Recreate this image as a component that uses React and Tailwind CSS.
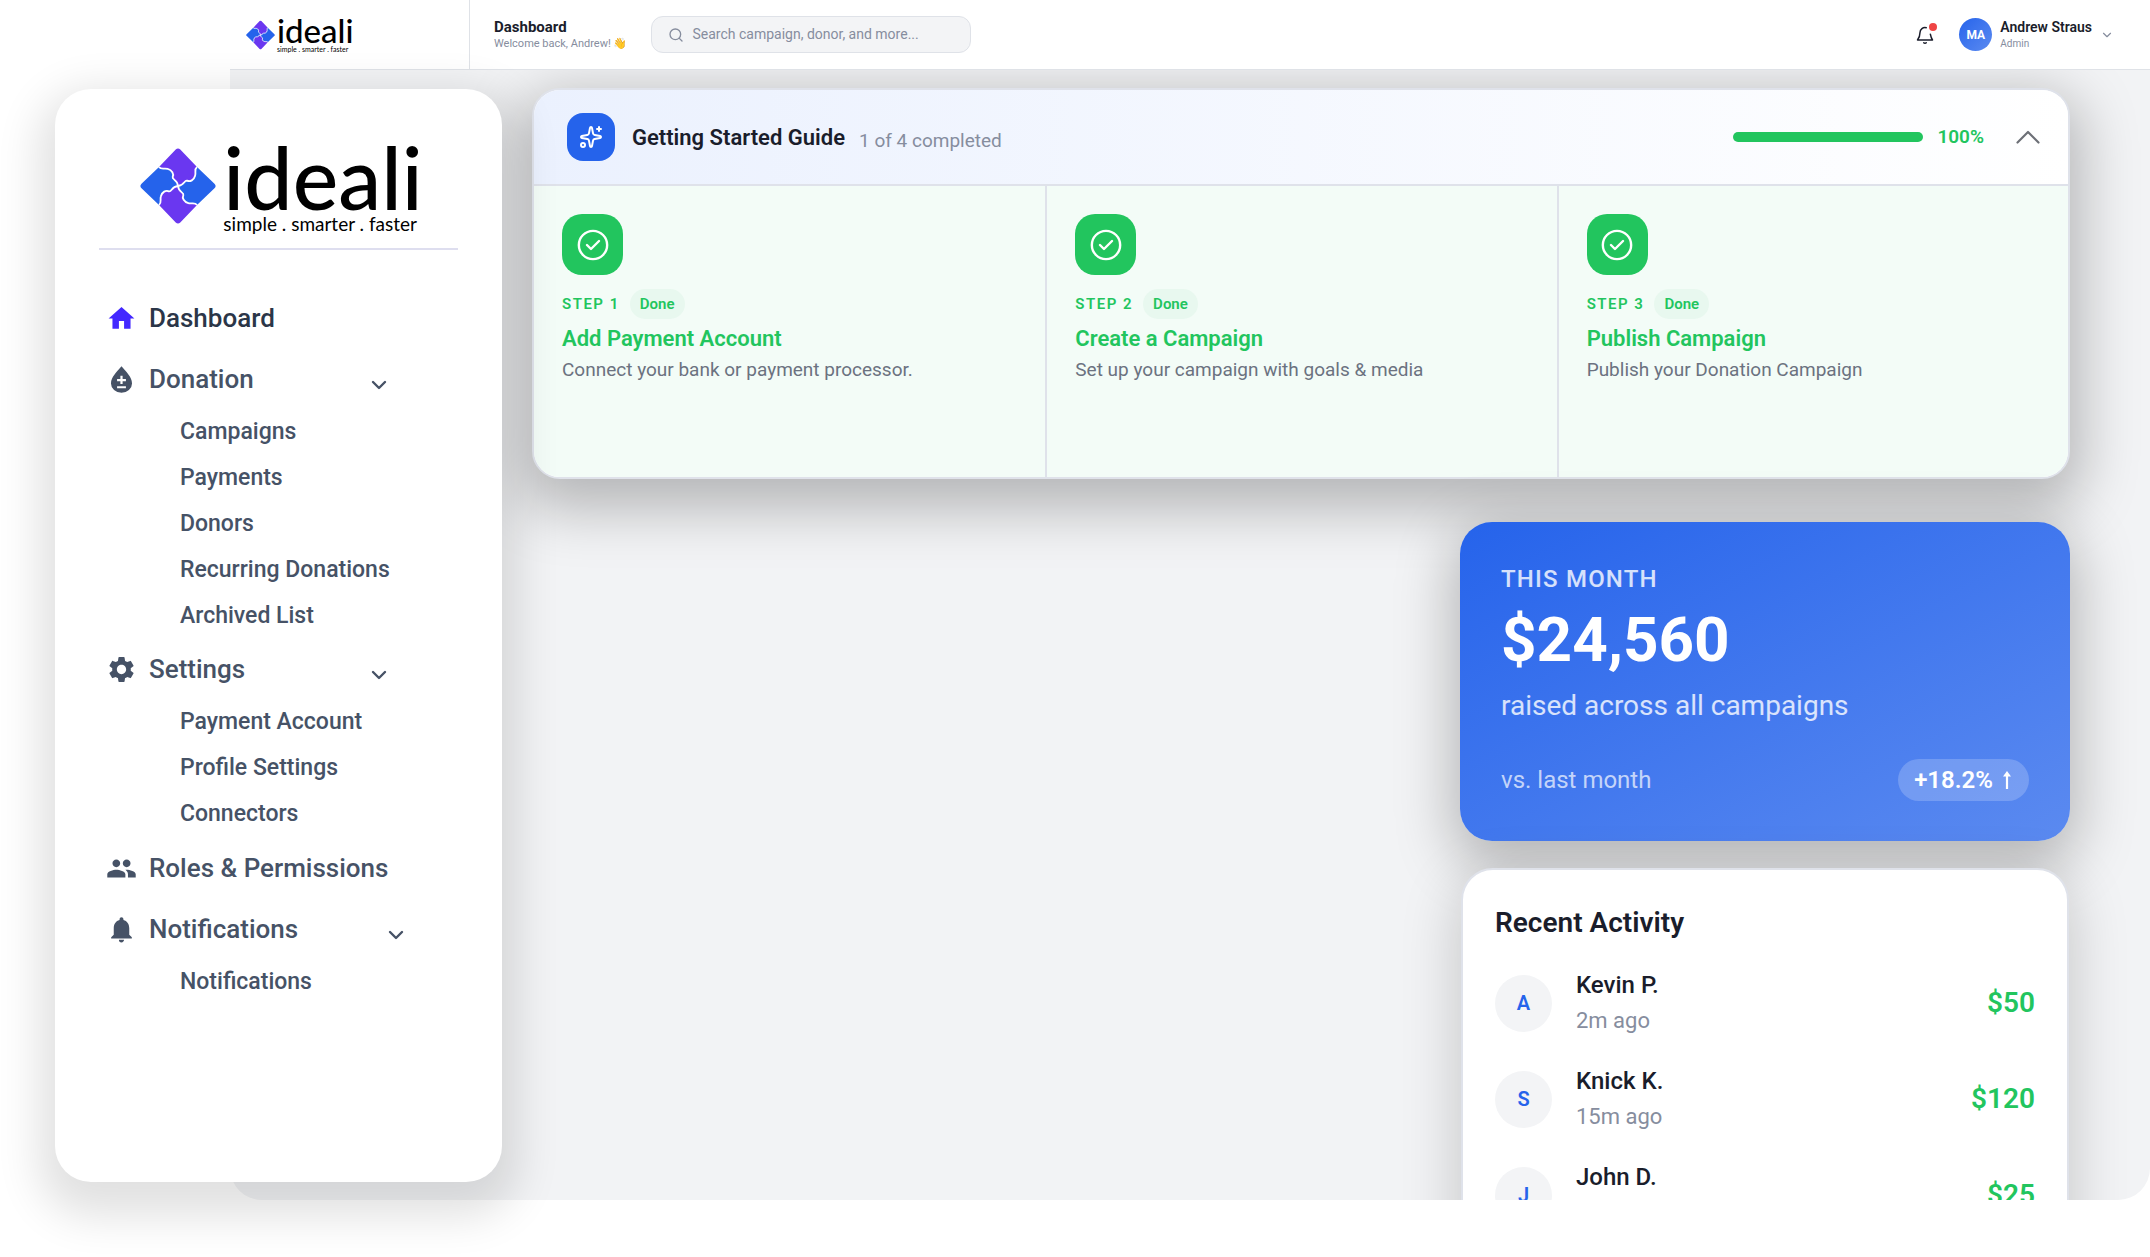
import { ChevronDown, Search, Sparkles } from "lucide-react";
import { MdHome, MdSettings, MdPeople, MdNotifications } from "react-icons/md";

const PIECE = "M-25-25C-22-21-18-24-13.5-22.5C-8-21-5-16-7-12C-8-8-1-9 0 0C9-1 8-8 12-7C16-5 21-8 22.5-13.5C24-18 21-22 25-25L3-48Q0-51-3-48Z";
const SEAM = "M-25-25C-22-21-18-24-13.5-22.5C-8-21-5-16-7-12C-8-8-1-9 0 0";

function LogoMark({ className }) {
  return (
    <svg viewBox="-50 -51 100 102" className={className} aria-hidden="true">
      <path d={PIECE} fill="#6a37f0" />
      <path d={PIECE} fill="#2563eb" transform="rotate(90)" />
      <path d={PIECE} fill="#6a37f0" transform="rotate(180)" />
      <path d={PIECE} fill="#2563eb" transform="rotate(270)" />
      {[0, 90, 180, 270].map((angle) => (
        <path key={angle} d={SEAM} fill="none" stroke="#fff" strokeWidth="2.400" transform={`rotate(${angle})`} />
      ))}
    </svg>
  );
}

function Logo({ large }) {
  return (
    <div className={large ? "flex items-center gap-[7px]" : "flex items-center gap-[2px]"}>
      <LogoMark className={large ? "h-[78px] w-[76px]" : "h-[30px] w-[29px]"} />
      <div className="font-[Lato] text-black">
        <div className={large ? "text-[86px] leading-[76px] font-medium" : "text-[33px] leading-[29px] font-medium"}>ideali</div>
        <div className={large ? "text-[19px] leading-[18px] whitespace-nowrap" : "text-[7px] leading-[8px] whitespace-nowrap"}>
          simple . smarter . faster
        </div>
      </div>
    </div>
  );
}

function DropIcon({ className }) {
  return (
    <svg viewBox="0 0 28 28" className={className} fill="currentColor" aria-hidden="true">
      <path
        fillRule="evenodd"
        d="M14 2C10 7 4.500 11.500 4.500 17.500a9.500 8.500 0 0 0 19 0C23.500 11.500 18 7 14 2zM13 10.500h2v3h3v2h-3v2.500h-2v-2.500h-3v-2h3zM10 20h8v2h-8z"
      />
    </svg>
  );
}

function TickCircle({ className }) {
  return (
    <svg viewBox="0 0 24 24" className={className} fill="none" stroke="currentColor" strokeWidth="1.700" strokeLinecap="round" strokeLinejoin="round" aria-hidden="true">
      <circle cx="12" cy="12" r="10" />
      <path d="m7.750 12 2.830 2.830 5.670-5.660" />
    </svg>
  );
}

const NAV = [
  { label: "Dashboard", icon: MdHome, active: true },
  {
    label: "Donation",
    icon: DropIcon,
    items: ["Campaigns", "Payments", "Donors", "Recurring Donations", "Archived List"],
  },
  { label: "Settings", icon: MdSettings, items: ["Payment Account", "Profile Settings", "Connectors"] },
  { label: "Roles & Permissions", icon: MdPeople },
  { label: "Notifications", icon: MdNotifications, wide: true, items: ["Notifications"] },
];

function NavGroup({ group }) {
  const Icon = group.icon;
  const content = (
    <>
      <span className="flex w-8 justify-center">
        <Icon className={group.active ? "size-[31px] text-[#4328ff]" : "size-[31px]"} />
      </span>
      <span className="flex-1 text-left">{group.label}</span>
    </>
  );
  return (
    <li>
      {group.items ? (
        <button
          type="button"
          aria-expanded="true"
          className={
            group.wide
              ? "flex h-[60px] w-[303px] items-center gap-3 text-[26px] font-medium"
              : "flex h-[60px] w-[286px] items-center gap-3 text-[26px] font-medium"
          }
        >
          {content}
          <ChevronDown className="mt-3 size-6" strokeWidth={2.4} />
        </button>
      ) : (
        <a
          href="#"
          className={
            group.active
              ? "flex h-[62px] items-center gap-3 text-[26px] font-medium text-[#2b3648]"
              : "flex h-[62px] items-center gap-3 text-[26px] font-medium"
          }
        >
          {content}
        </a>
      )}
      {group.items && (
        <ul>
          {group.items.map((item) => (
            <li key={item}>
              <a href="#" className="flex h-[46px] items-center pl-[75px] text-[23px] font-medium">
                {item}
              </a>
            </li>
          ))}
        </ul>
      )}
    </li>
  );
}

function Sidebar() {
  return (
    <aside className="z-20 col-start-1 row-start-1 mt-[89px] mb-[18px] ml-[55px] w-[447px] rounded-[36px] bg-white px-11 pt-[50px] shadow-[0_18px_44px_16px_rgba(0,0,0,0.12)]">
      <div className="flex justify-center border-b-2 border-[#dedeef] pb-[15px] pl-[6px]">
        <Logo large />
      </div>
      <nav className="mt-[37px] pl-[6px] text-[#465266]">
        <ul>
          {NAV.map((group) => (
            <NavGroup key={group.label} group={group} />
          ))}
        </ul>
      </nav>
    </aside>
  );
}

function NotificationBell() {
  return (
    <button type="button" aria-label="Alerts" className="relative flex size-6 items-center justify-center text-[#1a1d2b]">
      <svg viewBox="0 0 24 24" className="size-5" fill="none" stroke="currentColor" strokeWidth="1.800" strokeLinecap="round" strokeLinejoin="round" aria-hidden="true">
        <path d="M13.500 3.200A6 6 0 0 0 6 9c0 4-1.500 7-3 9h18c-1-1.500-2-4-2.600-7" />
        <path d="M10.500 21.300c.8.900 2.200.900 3 0" />
      </svg>
      <span className="absolute top-0 right-0 size-2 rounded-full bg-[#ef4444]" />
    </button>
  );
}

function Header() {
  return (
    <header className="relative z-10 flex h-[70px] shrink-0 items-center border-b border-[#dfe2e7] bg-white">
      <div className="flex h-full w-[240px] shrink-0 items-center border-r border-[#dfe2e7] pl-4">
        <Logo />
      </div>
      <div className="pl-6">
        <h1 className="text-[15px] leading-[18px] font-bold text-[#1a1d2b]">Dashboard</h1>
        <p className="text-[11px] leading-[16px] text-[#868d9e]">Welcome back, Andrew! 👋</p>
      </div>
      <label className="ml-6 flex h-[37px] w-[320px] items-center gap-2 rounded-xl border border-[#dfe2e8] bg-[#f3f4f6] px-4 text-[#868d9e]">
        <Search className="size-4" strokeWidth={2} />
        <input
          type="search"
          aria-label="Search"
          placeholder="Search campaign, donor, and more..."
          className="min-w-0 flex-1 bg-transparent text-[14px] outline-none placeholder:text-[#868d9e]"
        />
      </label>
      <div className="ml-auto flex items-center pr-9">
        <NotificationBell />
        <button type="button" className="ml-[22px] flex items-center gap-2 text-left">
          <span className="flex size-[33px] items-center justify-center rounded-full bg-linear-to-br from-[#2563eb] to-[#5b8af0] text-[12px] font-bold text-white">
            MA
          </span>
          <span>
            <span className="block text-[14px] leading-[17px] font-semibold text-[#1a1d2b]">Andrew Straus</span>
            <span className="block text-[10px] leading-[15px] text-[#868d9e]">Admin</span>
          </span>
          <ChevronDown className="size-[14px] text-[#868d9e]" />
        </button>
      </div>
    </header>
  );
}

const STEPS = [
  { n: 1, title: "Add Payment Account", text: "Connect your bank or payment processor." },
  { n: 2, title: "Create a Campaign", text: "Set up your campaign with goals & media" },
  { n: 3, title: "Publish Campaign", text: "Publish your Donation Campaign" },
];

function Guide() {
  return (
    <section className="shrink-0 overflow-hidden rounded-[28px] border-2 border-[#dfe2ea] bg-white shadow-[0_18px_56px_12px_rgba(0,0,0,0.25)]">
      <div className="flex h-[96px] items-center border-b-2 border-[#dfe2ea] bg-linear-to-r from-[#ebf1fe] to-white pr-[22px] pl-[33px]">
        <span className="flex size-12 items-center justify-center rounded-2xl bg-[#2563eb] text-white">
          <Sparkles className="size-6" strokeWidth={2} />
        </span>
        <h2 className="ml-[17px] text-[22px] font-semibold text-[#1a1d2b]">Getting Started Guide</h2>
        <span className="mt-2 ml-[14px] text-[19px] text-[#868d9e]">1 of 4 completed</span>
        <div role="progressbar" aria-label="Guide progress" aria-valuenow={100} className="ml-auto h-[10px] w-[190px] rounded-full bg-[#22c55e]" />
        <span className="ml-[14px] text-[19px] font-semibold text-[#22c55e]">100%</span>
        <button type="button" aria-label="Collapse guide" className="ml-[26px] flex size-9 items-center justify-center text-[#6d7077]">
          <svg viewBox="0 0 24 14" className="h-[14px] w-6" fill="none" stroke="currentColor" strokeWidth="2.200" strokeLinecap="round" strokeLinejoin="round" aria-hidden="true">
            <path d="M1.500 12.500 12 2l10.500 10.500" />
          </svg>
        </button>
      </div>
      <ol className="grid h-[291px] grid-cols-3 bg-[#f3fcf7]">
        {STEPS.map((step) => (
          <li key={step.n} className="border-l-2 border-[#dfe2ea] pt-[28px] pl-7 first:border-l-0">
            <span className="flex size-[61px] items-center justify-center rounded-[20px] bg-[#22c55e] text-white">
              <TickCircle className="size-[34px]" />
            </span>
            <div className="mt-[14px] flex items-center gap-[10px] text-[#22c55e]">
              <span className="text-[15px] font-semibold tracking-widest">STEP {step.n}</span>
              <span className="flex h-[30px] items-center rounded-full bg-[#e8f8ef] px-[10px] text-[15px] font-semibold">Done</span>
            </div>
            <h3 className="mt-[6px] text-[22px] leading-7 font-semibold text-[#22c55e]">{step.title}</h3>
            <p className="mt-[3px] text-[19px] leading-7 text-[#6b7280]">{step.text}</p>
          </li>
        ))}
      </ol>
    </section>
  );
}

function MonthCard() {
  return (
    <section className="h-[319px] shrink-0 rounded-[32px] bg-linear-to-br from-[#2563eb] to-[#5b8af0] px-[41px] pt-[42px] text-white shadow-[0_16px_56px_8px_rgba(0,0,0,0.25)]">
      <h2 className="text-[24px] leading-[30px] font-medium tracking-wider text-white/80">THIS MONTH</h2>
      <p className="mt-1 text-[62px] leading-[84px] font-bold">$24,560</p>
      <p className="mt-[6px] text-[28px] leading-[36px] text-white/80">raised across all campaigns</p>
      <div className="mt-[35px] flex items-center justify-between">
        <span className="text-[24px] text-white/70">vs. last month</span>
        <span className="flex h-[42px] items-center gap-2 rounded-full bg-white/20 px-4 text-[24px] font-semibold">
          +18.2%
          <svg viewBox="0 0 12 18" className="h-[18px] w-3" fill="none" stroke="currentColor" strokeWidth="2.200" role="img" aria-label="up">
            <path d="M6 18V3" />
            <path d="M6 0 10 5.500H2z" fill="currentColor" stroke="none" />
          </svg>
        </span>
      </div>
    </section>
  );
}

const ACTIVITY = [
  { initial: "A", name: "Kevin P.", time: "2m ago", amount: "$50" },
  { initial: "S", name: "Knick K.", time: "15m ago", amount: "$120" },
  { initial: "J", name: "John D.", amount: "$25" },
];

function Activity() {
  return (
    <section className="mx-px shrink-0 rounded-[32px] border-2 border-[#dfe2ea] bg-white px-8 pt-[35px] pb-8 shadow-[0_16px_56px_4px_rgba(0,0,0,0.18)]">
      <h2 className="text-[28px] leading-9 font-semibold text-[#1a1d2b]">Recent Activity</h2>
      <ul className="mt-[14px]">
        {ACTIVITY.map((row) => (
          <li key={row.name} className="flex h-24 items-center">
            <span className="flex size-[57px] items-center justify-center rounded-full bg-[#f3f4f6] text-[20px] font-semibold text-[#2563eb]">
              {row.initial}
            </span>
            <span className="ml-6 flex-1">
              <span className="block text-[24px] leading-[35px] font-medium text-[#1a1d2b]">{row.name}</span>
              <span className="block h-[35px] text-[22px] leading-[35px] text-[#868d9e]">{row.time}</span>
            </span>
            <span className="text-[28px] font-semibold text-[#22c55e]">{row.amount}</span>
          </li>
        ))}
      </ul>
    </section>
  );
}

export default function App() {
  return (
    <div className="h-screen overflow-hidden bg-white font-[Roboto,sans-serif]">
      <div className="grid h-[calc(100vh-57px)] grid-cols-1 grid-rows-[minmax(0,1fr)]">
        <div className="col-start-1 row-start-1 ml-[230px] flex flex-col overflow-hidden rounded-b-[32px] bg-[#f2f3f5]">
          <Header />
          <main className="flex min-h-0 flex-1 flex-col pt-[18px] pr-20 pl-[302px]">
            <Guide />
            <div className="mt-[43px] flex w-[610px] flex-col gap-[27px] self-end">
              <MonthCard />
              <Activity />
            </div>
          </main>
        </div>
        <Sidebar />
      </div>
    </div>
  );
}
